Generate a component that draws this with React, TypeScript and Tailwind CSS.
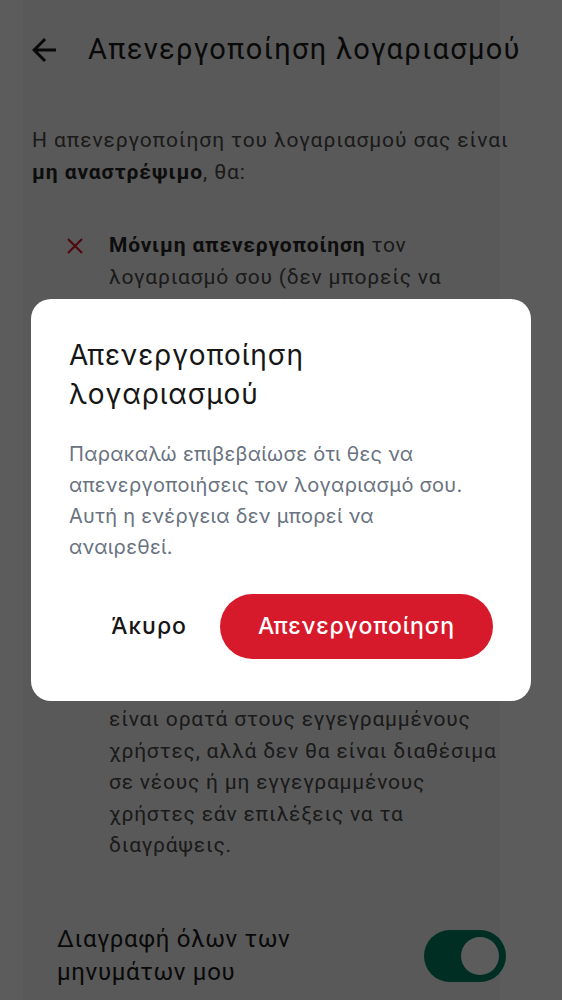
import { MdArrowBack } from "react-icons/md";

const bgFont = { fontFamily: "Roboto, 'Noto Sans', sans-serif" };
const dlgFont = { fontFamily: "Inter, 'Noto Sans', sans-serif" };

function Cross() {
  return (
    <svg width="16" height="16" viewBox="0 0 16 16" className="mt-[8px] shrink-0">
      <path d="M1 1L15 15M15 1L1 15" stroke="#d71a2b" strokeWidth="2.2" />
    </svg>
  );
}

function Check() {
  return (
    <svg width="16" height="16" viewBox="0 0 16 16" className="mt-[8px] shrink-0">
      <path d="M1 8l5 5L15 2" fill="none" stroke="#00805e" strokeWidth="2.2" />
    </svg>
  );
}

function Item({ icon, children }: { icon: React.ReactNode; children: React.ReactNode }) {
  return (
    <li className="flex gap-[26px]">
      {icon}
      <p className="w-[396px] text-[21px] leading-[31.6px] tracking-[0.8px] text-[#4a4a4a]">{children}</p>
    </li>
  );
}

export default function App() {
  return (
    <div
      className="relative h-[1000px] overflow-hidden bg-[linear-gradient(to_right,#fff_23px,#f6f6f6_23px,#f6f6f6_500px,#fff_500px)]"
      style={bgFont}
    >
      {/* page under the dialog */}
      <header className="flex h-[100px] items-center pl-[26px]">
        <MdArrowBack size={36} className="text-[#1a1a1a]" />
        <h1 className="ml-[26px] whitespace-nowrap text-[29px] tracking-[1.3px] text-[#1a1a1a]">
          Απενεργοποίηση λογαριασμού
        </h1>
      </header>

      <p className="mt-[24px] w-[540px] pl-[32px] text-[21px] leading-[32px] tracking-[0.9px] text-[#4a4a4a]">
        Η απενεργοποίηση του λογαριασμού σας είναι <b className="text-[#262626]">μη αναστρέψιμο</b>, θα:
      </p>

      <ul className="mt-[42px] flex flex-col pl-[67px]">
        <Item icon={<Cross />}>
          <b className="text-[#262626]">Μόνιμη απενεργοποίηση</b> τον
          <br />
          λογαριασμό σου (δεν μπορείς να
          <br />
          τον επαναφέρεις).
        </Item>
        <Item icon={<Cross />}>
          <b className="text-[#262626]">Διαγραφή</b> όλων των
          <br />
          προσωπικών σου στοιχείων,
          <br />
          των αγγελιών σου και των
          <br />
          αποθηκευμένων αναζητήσεων.
        </Item>
        <Item icon={<Cross />}>
          <b className="text-[#262626]">Αφαίρεση</b> όλων των
          <br />
          αγαπημένων σου αγγελιών,
          <br />
          των ειδοποιήσεων και των
          <br />
          ρυθμίσεων του λογαριασμού.
        </Item>
        <Item icon={<Check />}>
          Τα μηνύματα που έχεις ήδη
          <br />
          στείλει σε άλλους χρήστες
          <br />
          μέσα από την πλατφόρμα θα
          <br />
          εξακολουθούν να
          <br />
          είναι ορατά στους εγγεγραμμένους χρήστες, αλλά δεν θα είναι διαθέσιμα σε νέους ή μη εγγεγραμμένους χρήστες
          εάν επιλέξεις να τα διαγράψεις.
        </Item>
      </ul>

      <div className="mt-[61px] flex items-center justify-between pl-[57px] pr-[56px]">
        <span className="text-[24px] leading-[33px] tracking-[0.7px] text-[#1a1a1a]">
          Διαγραφή όλων των
          <br />
          μηνυμάτων μου
        </span>
        <span className="flex h-[52px] w-[82px] items-center justify-end rounded-full bg-[#00805e] pr-[7px]">
          <span className="h-[38px] w-[38px] rounded-full bg-white" />
        </span>
      </div>

      {/* backdrop + dialog */}
      <div className="absolute inset-0 flex items-center justify-center bg-black/[0.64] px-[31px]">
        <div className="w-full rounded-[20px] bg-white pb-[42px] pl-[38px] pr-[38px] pt-[37px]" style={dlgFont}>
          <h2 className="text-[28px] leading-[39px] tracking-[0.9px] text-[#161616]">Απενεργοποίηση λογαριασμού</h2>
          <p className="mt-[25px] text-[20px] leading-[31px] tracking-[0.3px] text-[#697280]">
            Παρακαλώ επιβεβαίωσε ότι θες να απενεργοποιήσεις τον λογαριασμό σου. Αυτή η ενέργεια δεν μπορεί να
            <br />
            αναιρεθεί.
          </p>
          <div className="mt-[31px] flex items-center justify-end gap-[33px]">
            <button className="text-[23px] font-medium tracking-[1px] text-[#161616]">Άκυρο</button>
            <button className="h-[65px] w-[273px] rounded-full bg-[#d71a2b] text-[23px] font-medium tracking-[0.8px] text-white">
              Απενεργοποίηση
            </button>
          </div>
        </div>
      </div>
    </div>
  );
}
